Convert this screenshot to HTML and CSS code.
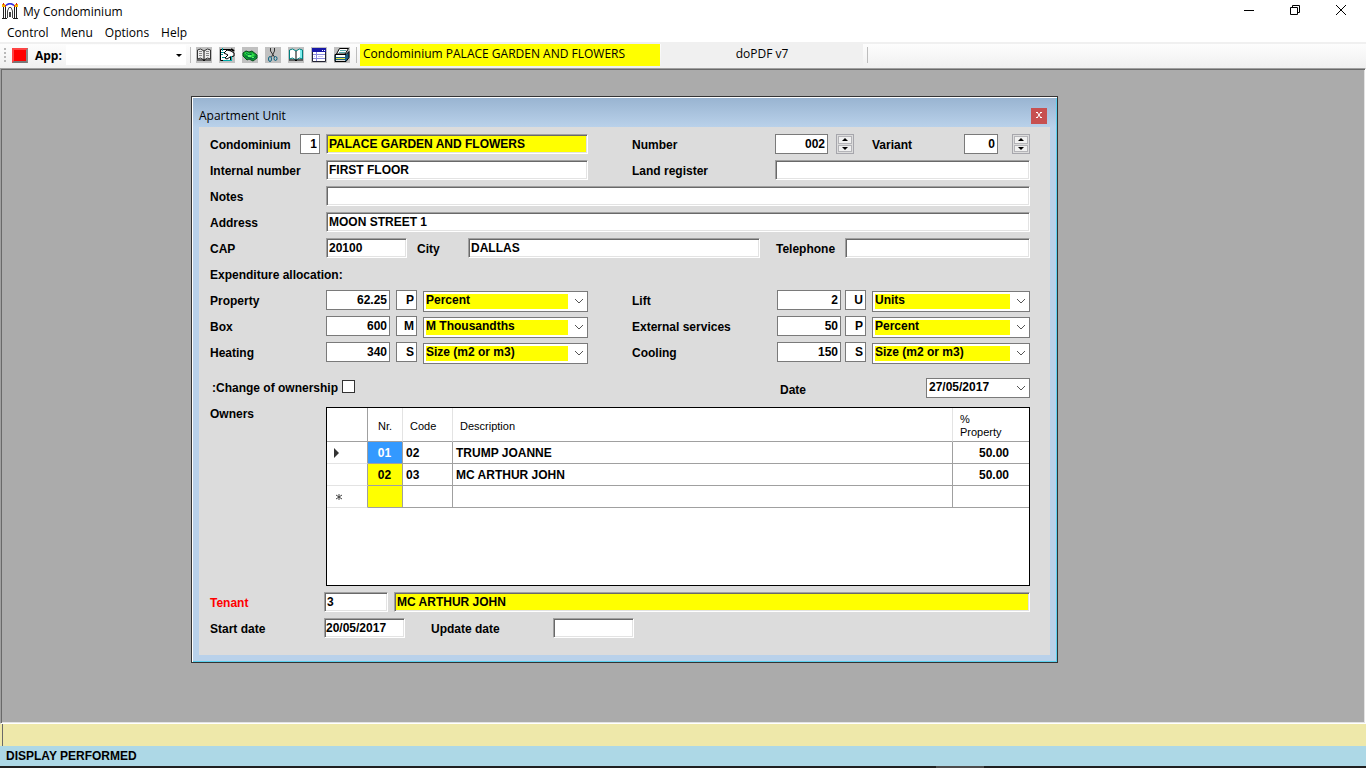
FILE: index.html
```html
<!DOCTYPE html>
<html lang="en">
<head>
  <meta charset="UTF-8">
  <meta name="viewport" content="width=device-width, initial-scale=1.0">
  <title>My Condominium</title>
  <link rel="stylesheet" href="styles.css">
</head>
<body>
  <header class="titlebar">
    <svg class="app-icon" width="16" height="16" viewBox="0 0 16 16" fill="none">
      <path d="M4 2.500C6 0 10 0 12 2.500" stroke="#3030e0" stroke-width="1.500"/>
      <path d="M1.500 15V4M3.500 15V4M12.500 15V4M14.500 15V4M0 15.500h5M11 15.500h5" stroke="#222"/>
      <path d="M5.500 15V8L7 4.500h2L10.500 8v7M7.500 9v5M8.500 9v5" stroke="#444"/>
      <path d="M0 1h3v3H0zM13 1h3v3h-3z" fill="#f5b800"/>
      <path d="M1 0h1v2H1zM3 2h1v2H3zM12 2h1v2h-1zM14 0h1v2h-1z" fill="#d22"/>
    </svg>
    <h1>My Condominium</h1>
    <div class="window-buttons">
      <button aria-label="Minimize"><svg width="12" height="12" viewBox="0 0 12 12"><path d="M1 6.500h10" stroke="#000"/></svg></button>
      <button aria-label="Restore"><svg width="12" height="12" viewBox="0 0 12 12" fill="none" stroke="#000"><path d="M1.500 3.500h7v7h-7zM3.500 3V1.500h7v7H9"/></svg></button>
      <button aria-label="Close"><svg width="12" height="12" viewBox="0 0 12 12"><path d="M1 1l10 10M11 1L1 11" stroke="#000"/></svg></button>
    </div>
  </header>

  <nav class="menubar">
    <button>Control</button>
    <button>Menu</button>
    <button>Options</button>
    <button>Help</button>
  </nav>

  <div class="toolbar">
    <span class="grip"></span>
    <button class="stop" aria-label="Exit"></button>
    <label class="app-label" for="app">App:</label>
    <div class="app-combo">
      <select id="app"><option></option></select>
      <svg width="6" height="3" viewBox="0 0 6 3"><path d="M0 0h6L3 3z"/></svg>
    </div>
    <span class="sep"></span>
    <div class="tools">
      <button aria-label="Registry">
        <svg width="16" height="16" viewBox="0 0 16 16"><path fill="#c0c0c0" d="M0 0h16v16H0z"/><path d="M1.500 3l3-1L8 4l3.500-2 3 1v9l-3-1L8 13l-3.500-2-3 1z" fill="#eee" stroke="#333"/><path d="M8 4v9M1 13h6l1 1 1-1h6" stroke="#111" fill="none"/><path d="M3 4.500h3M3 6.500h3M3 8.500h3M10 4.500h3M10 6.500h3M10 8.500h3" stroke="#888"/></svg>
      </button>
      <button aria-label="Edit">
        <svg width="16" height="16" viewBox="0 0 16 16"><path fill="#c0c0c0" d="M0 0h16v16H0z"/><path d="M1.500 2.500h10v11h-10z" fill="#fff" stroke="#000"/><path d="M2 5.500h3M2 7.500h2M3 10.500h3" stroke="#088"/><path d="M5 6l3-3 4 1 3 2v3l-4 1-3 2-2-1 3-3z" fill="#fff" stroke="#000"/><path d="M4 13.500h9M12.500 9v5M3.500 1v3" stroke="#0aa" fill="none"/><path d="M12 2l3 2" stroke="#000" stroke-width="2"/></svg>
      </button>
      <button aria-label="Payments">
        <svg width="16" height="16" viewBox="0 0 16 16"><path fill="#c0c0c0" d="M0 0h16v16H0z"/><path d="M1 6l3-2 3 1 3-1 5 4v3l-4 3-4-2-2 1-4-4z" fill="#12a030" stroke="#064d1c"/><path d="M2 6l3-1 3 2 2-1 3 2-3 2-4-1z" fill="#2fe04a"/><path d="M4 6l3 2 3-1M3 9l4 2 4 1 3-3" stroke="#064" fill="none"/><path d="M6 8h3v2H6zM10 10h2v1h-2z" fill="#5cf76f"/></svg>
      </button>
      <button aria-label="Cut">
        <svg width="16" height="16" viewBox="0 0 16 16"><path fill="#c0c0c0" d="M0 0h16v16H0z"/><path d="M5.500 1v3l4 6M9.500 1v3l-3 6" stroke="#333" fill="none"/><g fill="none" stroke="#066080"><ellipse cx="5" cy="12" rx="1.500" ry="2.500"/><ellipse cx="10.500" cy="11.500" rx="1.500" ry="2"/></g></svg>
      </button>
      <button aria-label="Open book">
        <svg width="16" height="16" viewBox="0 0 16 16"><path fill="#c0c0c0" d="M0 0h16v16H0z"/><path d="M1.500 3l3-1L8 4l3.500-2 3 1v9l-3-1L8 13l-3.500-2-3 1z" fill="#fff" stroke="#008080"/><path d="M8 4v9M1 13h6l1 1 1-1h6" stroke="#000" fill="none"/><path d="M13 3v8" stroke="#0dd"/></svg>
      </button>
      <button aria-label="Table">
        <svg width="16" height="16" viewBox="0 0 16 16"><path fill="#c0c0c0" d="M0 0h16v16H0z"/><path d="M1.500 1.500h13v13h-13z" fill="#fff" stroke="#223"/><path d="M1 1h14v4H1z" fill="#1818a8"/><path d="M2 7h12v1H2zM5 5h1v9H5zM2 11h12v1H2z" fill="#8a8ade"/><path d="M3 9h1v1H3zM7 9h5v1H7z" fill="#c6c6f4"/><path d="M11 3h1v1h-1zM13 3h1v1h-1z" fill="#fff"/></svg>
      </button>
      <button aria-label="Print">
        <svg width="16" height="16" viewBox="0 0 16 16"><path fill="#c0c0c0" d="M0 0h16v16H0z"/><path d="M5.500 1.500h9L11 7H2.500z" fill="#fff" stroke="#000"/><path d="M6 3.500h6M5 5.500h6" stroke="#5aa"/><path d="M1 7.500h11l3-3v6l-3 4H1z" fill="#1c5f80" stroke="#000"/><path d="M2 8h9v2H2z" fill="#fff"/><path d="M2 11h9v1H2z" fill="#e8e840"/><path d="M2 13h9v1H2z" fill="#ddd"/></svg>
      </button>
    </div>
    <span class="sep"></span>
    <div class="current">Condominium PALACE GARDEN AND FLOWERS</div>
    <div class="printer">doPDF v7</div>
    <span class="sep"></span>
  </div>

  <main class="desktop">
    <section class="dialog">
      <div class="dialog-title">
        <h2>Apartment Unit</h2>
        <button class="dialog-close" aria-label="Close"><svg width="6" height="6" viewBox="0 0 6 6"><path d="M1 0l4 6M5 0L1 6M0 .5h2M4 .5h2M0 5.500h2M4 5.500h2" stroke="#fff"/></svg></button>
      </div>

      <form class="form">
        <div class="row halves">
          <div class="half">
            <label class="grow" for="condo">Condominium</label>
            <input class="flat num tiny" id="condo" value="1">
            <input class="field wide yellow" aria-label="Condominium name" value="PALACE GARDEN AND FLOWERS">
          </div>
          <div class="half">
            <label class="lead" for="number">Number</label>
            <input class="flat num" id="number" value="002">
            <div class="spinner">
              <button type="button" aria-label="Next unit"><svg width="6" height="3" viewBox="0 0 6 3"><path d="M0 3h6L3 0z"/></svg></button>
              <button type="button" aria-label="Previous unit"><svg width="6" height="3" viewBox="0 0 6 3"><path d="M0 0h6L3 3z"/></svg></button>
            </div>
            <label class="grow" for="variant">Variant</label>
            <input class="flat num small" id="variant" value="0">
            <div class="spinner last">
              <button type="button" aria-label="Next variant"><svg width="6" height="3" viewBox="0 0 6 3"><path d="M0 3h6L3 0z"/></svg></button>
              <button type="button" aria-label="Previous variant"><svg width="6" height="3" viewBox="0 0 6 3"><path d="M0 0h6L3 3z"/></svg></button>
            </div>
          </div>
        </div>

        <div class="row halves">
          <div class="half">
            <label class="lead" for="internal">Internal number</label>
            <input class="field" id="internal" value="FIRST FLOOR">
          </div>
          <div class="half">
            <label class="lead" for="land">Land register</label>
            <input class="field" id="land">
          </div>
        </div>

        <div class="row">
          <label class="lead" for="notes">Notes</label>
          <input class="field" id="notes">
        </div>

        <div class="row">
          <label class="lead" for="address">Address</label>
          <input class="field" id="address" value="MOON STREET 1">
        </div>

        <div class="row">
          <label class="lead" for="cap">CAP</label>
          <input class="field short" id="cap" value="20100">
          <label class="city" for="city">City</label>
          <input class="field" id="city" value="DALLAS">
          <label class="phone" for="phone">Telephone</label>
          <input class="field phone-field" id="phone">
        </div>

        <div class="row"><p>Expenditure allocation:</p></div>

        <div class="row halves shares">
          <div class="half">
            <label class="lead" for="property">Property</label>
            <input class="flat num amount" id="property" value="62.25">
            <input class="flat num unit" aria-label="Property unit code" value="P">
            <div class="combo"><select aria-label="Property unit"><option>Percent</option></select><svg width="10" height="6" viewBox="0 0 10 6"><path d="M1 1l4 4 4-4"/></svg></div>
          </div>
          <div class="half">
            <label class="lead" for="lift">Lift</label>
            <input class="flat num amount" id="lift" value="2">
            <input class="flat num unit" aria-label="Lift unit code" value="U">
            <div class="combo"><select aria-label="Lift unit"><option>Units</option></select><svg width="10" height="6" viewBox="0 0 10 6"><path d="M1 1l4 4 4-4"/></svg></div>
          </div>
        </div>

        <div class="row halves shares">
          <div class="half">
            <label class="lead" for="box">Box</label>
            <input class="flat num amount" id="box" value="600">
            <input class="flat num unit" aria-label="Box unit code" value="M">
            <div class="combo"><select aria-label="Box unit"><option>M Thousandths</option></select><svg width="10" height="6" viewBox="0 0 10 6"><path d="M1 1l4 4 4-4"/></svg></div>
          </div>
          <div class="half">
            <label class="lead" for="external">External services</label>
            <input class="flat num amount" id="external" value="50">
            <input class="flat num unit" aria-label="External services unit code" value="P">
            <div class="combo"><select aria-label="External services unit"><option>Percent</option></select><svg width="10" height="6" viewBox="0 0 10 6"><path d="M1 1l4 4 4-4"/></svg></div>
          </div>
        </div>

        <div class="row halves shares">
          <div class="half">
            <label class="lead" for="heating">Heating</label>
            <input class="flat num amount" id="heating" value="340">
            <input class="flat num unit" aria-label="Heating unit code" value="S">
            <div class="combo"><select aria-label="Heating unit"><option>Size (m2 or m3)</option></select><svg width="10" height="6" viewBox="0 0 10 6"><path d="M1 1l4 4 4-4"/></svg></div>
          </div>
          <div class="half">
            <label class="lead" for="cooling">Cooling</label>
            <input class="flat num amount" id="cooling" value="150">
            <input class="flat num unit" aria-label="Cooling unit code" value="S">
            <div class="combo"><select aria-label="Cooling unit"><option>Size (m2 or m3)</option></select><svg width="10" height="6" viewBox="0 0 10 6"><path d="M1 1l4 4 4-4"/></svg></div>
          </div>
        </div>

        <div class="row change">
          <label for="change">:Change of ownership</label>
          <input type="checkbox" id="change">
          <label class="date-label" for="date">Date</label>
          <div class="combo date"><input class="flat" id="date" value="27/05/2017"><svg width="10" height="6" viewBox="0 0 10 6"><path d="M1 1l4 4 4-4"/></svg></div>
        </div>

        <div class="owners">
          <p class="lead">Owners</p>
          <div class="grid">
            <table>
              <colgroup><col class="c-head"><col class="c-nr"><col class="c-code"><col><col class="c-prop"></colgroup>
              <thead>
                <tr><th></th><th class="center">Nr.</th><th>Code</th><th>Description</th><th>%<br>Property</th></tr>
              </thead>
              <tbody>
                <tr>
                  <th><svg width="5" height="10" viewBox="0 0 5 10"><path d="M0 0l5 5-5 5z" fill="#333"/></svg></th>
                  <td class="nr selected">01</td><td>02</td><td>TRUMP JOANNE</td><td class="right">50.00</td>
                </tr>
                <tr>
                  <th></th>
                  <td class="nr">02</td><td>03</td><td>MC ARTHUR JOHN</td><td class="right">50.00</td>
                </tr>
                <tr>
                  <th class="new"><svg width="6" height="6" viewBox="0 0 6 6"><path d="M3 0v6M0 1l6 4M0 5l6-4" stroke="#444"/></svg></th>
                  <td class="nr"></td><td></td><td></td><td></td>
                </tr>
              </tbody>
            </table>
          </div>
        </div>

        <div class="row people">
          <label class="lead red" for="tenant">Tenant</label>
          <input class="field id" id="tenant" value="3">
          <input class="field yellow" aria-label="Tenant name" value="MC ARTHUR JOHN">
        </div>

        <div class="row people">
          <label class="lead" for="start">Start date</label>
          <input class="field short tight" id="start" value="20/05/2017">
          <label class="update" for="update">Update date</label>
          <input class="field short" id="update">
        </div>
      </form>
    </section>
  </main>

  <div class="message"></div>
  <footer class="status">DISPLAY PERFORMED</footer>
  <div class="taskbar"></div>
</body>
</html>
```
FILE: styles.css
```css
* {
  box-sizing: border-box;
}
body {
  margin: 0;
  height: 100vh;
  display: flex;
  flex-direction: column;
  overflow: hidden;
  background: white;
  color: black;
  font-family: "Open Sans", "Noto Sans", sans-serif;
  font-size: 12px;
}
h1, h2, p {
  margin: 0;
  font-size: 12px;
  font-weight: normal;
}
button, input, select {
  margin: 0;
  padding: 0;
  border: none;
  border-radius: 0;
  background: none;
  color: inherit;
  font: inherit;
  outline: none;
}
svg {
  display: block;
}

/* main window */
.titlebar {
  display: flex;
  align-items: center;
  height: 24px;
  padding: 0 2px 2px;
  gap: 5px;
}
.window-buttons {
  display: flex;
  margin-left: auto;
  height: 20px;
  align-self: flex-start;
}
.window-buttons button {
  width: 46px;
  display: flex;
  justify-content: center;
  align-items: center;
}
.menubar {
  display: flex;
  height: 18px;
  padding-left: 7px;
  gap: 12px;
  line-height: 18px;
}
.toolbar {
  display: flex;
  align-items: center;
  height: 26px;
  padding: 0 0 2px 4px;
  border-top: 2px solid #f0f0f0;
  background: linear-gradient(#fdfdfd, #f0f0f0);
}
.grip {
  width: 2px;
  height: 15px;
  margin-right: 6px;
  background: repeating-linear-gradient(#b8b8b8 0 2px, transparent 2px 4px);
}
.stop {
  width: 16px;
  height: 15px;
  background: #f00;
  border: 2px solid;
  border-color: #f44 #888 #777 #f44;
}
.app-label {
  width: 38px;
  padding-left: 7px;
  font-weight: bold;
}
.app-combo {
  position: relative;
  width: 120px;
  height: 20px;
  background: white;
}
.app-combo select {
  appearance: none;
  width: 100%;
  height: 100%;
}
.app-combo svg {
  position: absolute;
  right: 4px;
  top: 9px;
}
.sep {
  width: 1px;
  height: 16px;
  margin: 0 3px 0 4px;
  background: #bdbdbd;
}
.tools {
  display: flex;
  gap: 7px;
  margin: 0 2px;
}
.current, .printer {
  height: 22px;
  line-height: 20px;
}
.current {
  width: 300px;
  padding-left: 3px;
  background: yellow;
}
.printer {
  width: 202px;
  margin-left: 1px;
  background: #f0f0f0;
  text-align: center;
}
.desktop {
  position: relative;
  flex: 1;
  background: #ababab;
  border: 1px solid #a0a0a0;
  border-color: #a0a0a0 white white #a0a0a0;
  box-shadow: inset 1px 1px #696969, inset -1px -1px #e3e3e3;
}
.message {
  height: 22px;
  margin-left: 2px;
  border-left: 1px solid #696969;
  background: #eee8aa;
  box-shadow: -2px 0 #eee8aa;
}
.status {
  height: 20px;
  padding-left: 6px;
  background: lightblue;
  font: bold 12px/21px "Liberation Sans", Arial, sans-serif;
}
.taskbar {
  height: 2px;
  background: linear-gradient(#4d4d4d, #4d4d4d) 71% 0 / 48px 2px no-repeat #202020;
}

/* apartment dialog */
.dialog {
  position: absolute;
  left: 190px;
  top: 27px;
  width: 867px;
  max-width: 100%;
  border: 1px solid #333;
  background: #b9d1ea;
  box-shadow: inset 1px 1px white, inset -1px -1px #5bd0ee;
  padding: 1px 7px 7px;
}
.dialog-title {
  display: flex;
  justify-content: space-between;
  align-items: center;
  height: 29px;
  margin: 0 -6px;
  padding: 6px 9px 0 6px;
  background: linear-gradient(#99b4d1, #b9d1ea);
}
.dialog-close {
  width: 16px;
  height: 16px;
  padding: 0 5px 2px;
  background: #c75050;
}
.form {
  display: flex;
  flex-direction: column;
  gap: 6px;
  padding: 7px 20px 17px 11px;
  background: #dcdcdc;
  font: bold 12px/20px "Liberation Sans", Arial, sans-serif;
}
.form p {
  font-weight: bold;
}
.row, .half {
  display: flex;
  height: 20px;
}
.row label, .row p {
  padding-top: 1px;
}
.halves {
  display: grid;
  grid-template-columns: 378px 1fr;
  column-gap: 44px;
}
.lead {
  flex: none;
  width: 116px;
}
.half + .half .lead {
  width: 143px;
}
.grow {
  flex: 1;
}
.field, .flat {
  height: 20px;
  background: white;
  line-height: 16px;
}
.field {
  flex: 1;
  min-width: 0;
  padding: 0 2px 1px;
  border: 1px solid;
  border-color: #a0a0a0 white white #a0a0a0;
  box-shadow: inset 1px 1px #696969, inset -1px -1px #e3e3e3;
}
.flat {
  flex: none;
  width: 53px;
  padding: 0 2px 1px;
  border: 1px solid #7a7a7a;
}
.num {
  text-align: right;
}
.field.yellow {
  background: yellow;
}
.field.wide {
  flex: none;
  width: 262px;
}
.field.short {
  flex: none;
  width: 81px;
}
.field.id {
  flex: none;
  width: 64px;
  margin-right: 6px;
}
.field.tight {
  padding: 0 1px 1px;
}
.flat.tiny {
  width: 20px;
  margin-right: 6px;
}
.flat.small {
  width: 34px;
}
.flat.amount {
  width: 64px;
  margin-right: 6px;
}
.flat.unit {
  width: 21px;
  margin-right: 6px;
}
.shares .half + .half .lead {
  width: 145px;
}
.half + .half .amount {
  margin-right: 4px;
}
.spinner {
  width: 18px;
  height: 20px;
  margin: 0 18px 0 8px;
  padding: 1px;
  border: 1px solid #a6a6ac;
  display: flex;
  flex-direction: column;
  gap: 1px;
  background: #dcdcdc;
}
.spinner.last {
  margin: 0 0 0 14px;
}
.spinner button {
  flex: 1;
  display: flex;
  justify-content: center;
  align-items: center;
  border: 1px solid #b4b4b8;
  background: #f0f0f0;
}
.row .city {
  width: 61px;
  padding-left: 10px;
}
.row .phone {
  width: 85px;
  padding-left: 16px;
}
.field.phone-field {
  flex: none;
  width: 185px;
}
.combo {
  position: relative;
  flex: 1;
}
.combo select {
  appearance: none;
  width: 100%;
  height: 21px;
  padding: 0 2px 3px;
  border: 1px solid #7a7a7a;
  background: linear-gradient(yellow, yellow) 2px 2px / calc(100% - 21px) 15px no-repeat white;
  line-height: 16px;
}
.combo svg {
  position: absolute;
  right: 4px;
  top: 8px;
  fill: none;
  stroke: #555;
}
.row.change {
  margin: 9px 0 4px;
}
.change label {
  padding-left: 2px;
}
.change input[type="checkbox"] {
  appearance: none;
  width: 13px;
  height: 13px;
  margin: 3px 0 0 4px;
  border: 1px solid #333;
  background: white;
}
.change .date-label {
  margin: 2px 0 0 auto;
  width: 148px;
}
.combo.date {
  flex: none;
  width: 104px;
}
.date .flat {
  width: 100%;
}

/* owners grid */
.owners {
  display: flex;
}
.owners .lead {
  line-height: 14px;
}
.grid {
  flex: 1;
  height: 179px;
  border: 1px solid black;
  background: white;
}
.grid table {
  width: 100%;
  table-layout: fixed;
  border-collapse: separate;
  border-spacing: 0;
}
.c-head {
  width: 41px;
}
.c-nr {
  width: 35px;
}
.c-code {
  width: 50px;
}
.c-prop {
  width: 76px;
}
.grid th, .grid td {
  height: 22px;
  padding: 1px 4px 0 3px;
  border-right: 1px solid #a0a0a0;
  border-bottom: 1px solid #a0a0a0;
  line-height: 20px;
  text-align: left;
}
.grid tr > :last-child {
  border-right: none;
}
.grid thead th {
  height: 34px;
  padding: 3px 7px 0;
  border-right-color: #e3e3e3;
  font-size: 11px;
  font-weight: normal;
  line-height: 13px;
}
.grid tr > th:first-child {
  border-right-color: #a0a0a0;
}
.grid tbody th {
  padding-left: 7px;
  border-bottom-color: #e3e3e3;
}
.grid tbody th.new {
  padding-left: 9px;
}
.grid .center {
  text-align: center;
}
.grid .nr {
  background: yellow;
  text-align: center;
}
.grid .selected {
  background: #3399ff;
  color: white;
}
.grid .right {
  padding-right: 20px;
  text-align: right;
}

.people .lead {
  width: 114px;
}
.red {
  color: red;
}
.row .update {
  width: 148px;
  padding-left: 26px;
}
```
